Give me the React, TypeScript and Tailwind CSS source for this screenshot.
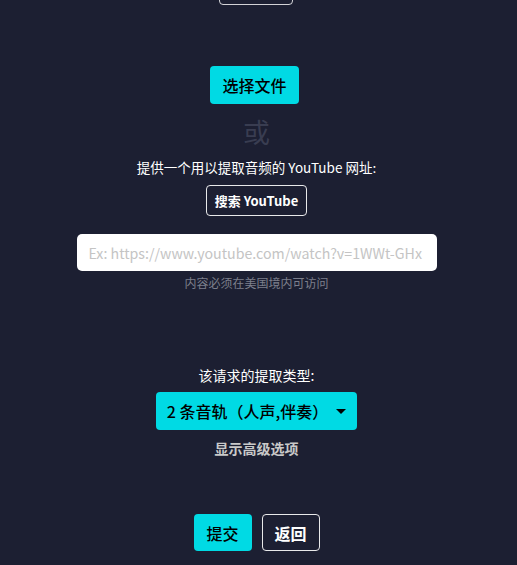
import React from "react";

const font = "font-['Noto_Sans_CJK_SC','Noto_Sans',sans-serif]";

export default function App() {
  return (
    <div className={`h-[565px] overflow-hidden bg-[#1c1f32] ${font} text-white`}>
      <div className="flex flex-col items-center pr-[4px]">
        {/* previous step button, scrolled mostly out of view */}
        <div className="-mt-[32px] mr-[2px] h-[37px] w-[74px] rounded-[4px] border border-white/80" />

        <button className="mt-[61px] mr-[4px] h-[38px] rounded-[4px] bg-[#00dae4] px-[12px] text-[16px] font-medium text-black">
          选择文件
        </button>

        <div className="mt-[8px] text-[27px] leading-[40px] text-[#393d51]">或</div>

        <p className="mt-[6px] text-[13.5px] leading-[18px] text-white">
          提供一个用以提取音频的 YouTube 网址:
        </p>

        <button className="mt-[9px] h-[31px] rounded-[4px] border border-white/90 px-[8px] text-[13px] font-bold text-white">
          搜索 YouTube
        </button>

        <input
          className={`mt-[18px] h-[37px] w-[360px] rounded-[5px] bg-white pl-[12px] pr-[10px] text-[14.2px] text-black outline-none placeholder:text-[#c4c4c4] ${font}`}
          placeholder="Ex: https://www.youtube.com/watch?v=1WWt-GHx"
        />

        <p className="mt-[3px] text-[12px] leading-[18px] text-[#7c7f8c]">内容必须在美国境内可访问</p>

        <p className="mt-[74px] text-[14px] leading-[18px] text-white">该请求的提取类型:</p>

        <button className="mt-[8px] flex h-[38px] items-center gap-[8px] rounded-[4px] bg-[#00dae4] px-[11px] text-[16px] font-medium text-black">
          <span>2 条音轨（人声,伴奏）</span>
          <span className="h-0 w-0 border-x-[5px] border-t-[5px] border-x-transparent border-t-black" />
        </button>

        <button className="mt-[9px] text-[14px] font-bold leading-[18px] text-[#c9c9c9]">显示高级选项</button>

        <div className="mt-[57px] flex gap-[10px]">
          <button className="h-[37px] w-[58px] rounded-[4px] bg-[#00dae4] text-[16px] font-medium text-black">提交</button>
          <button className="h-[37px] w-[58px] rounded-[4px] border border-white/90 text-[16px] font-bold text-white">返回</button>
        </div>
      </div>
    </div>
  );
}
